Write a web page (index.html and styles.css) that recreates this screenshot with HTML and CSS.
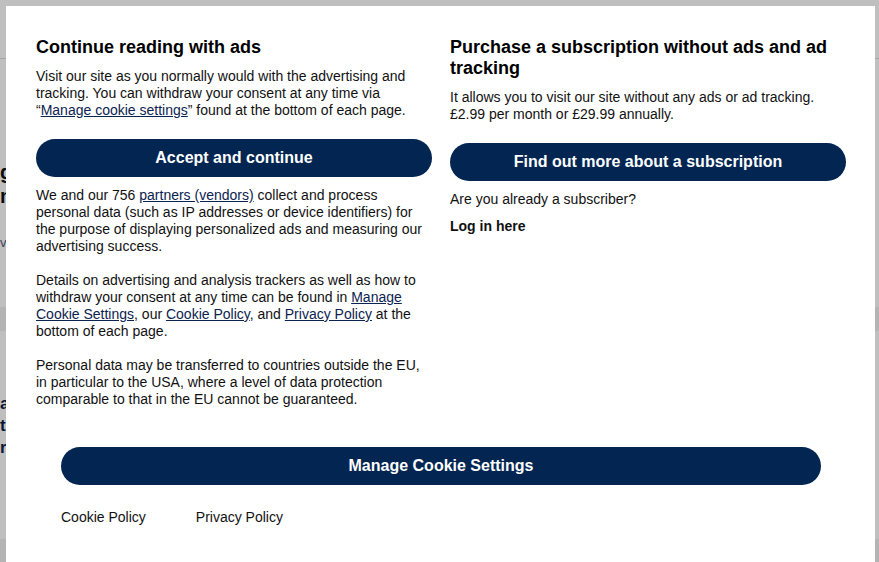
FILE: index.html
```html
<!DOCTYPE html>
<html lang="en">
<head>
<meta charset="utf-8">
<title>Cookie consent</title>
<link rel="stylesheet" href="styles.css">
</head>
<body>
<div class="page">
  <div class="page-header"></div>
  <div class="story-title">
    <span class="line">great news for the region</span>
    <span class="line">new plans announced</span>
  </div>
  <div class="story-meta">video report</div>
  <div class="band"></div>
  <div class="story-title2">
    <span class="line">a look back at the week</span>
    <span class="line">the latest headlines</span>
    <span class="line">reports from abroad</span>
  </div>
  <div class="band band-bottom"></div>
</div>

<div class="backdrop"></div>

<div class="modal" role="dialog" aria-modal="true">
  <div class="columns">
    <section class="col">
      <h2 class="title">Continue reading with ads</h2>
      <p class="text">Visit our site as you normally would with the advertising and tracking. You can withdraw your consent at any time via “<a class="link" href="#">Manage cookie settings</a>” found at the bottom of each page.</p>
      <button class="btn">Accept and continue</button>
      <div class="details">
        <p class="text">We and our 756 <a class="link" href="#">partners (vendors)</a> collect and process personal data (such as IP addresses or device identifiers) for the purpose of displaying personalized ads and measuring our advertising success.</p>
        <p class="text">Details on advertising and analysis trackers as well as how to withdraw your consent at any time can be found in <a class="link" href="#">Manage Cookie Settings</a>, our <a class="link" href="#">Cookie Policy</a>, and <a class="link" href="#">Privacy Policy</a> at the bottom of each page.</p>
        <p class="text">Personal data may be transferred to countries outside the EU, in particular to the USA, where a level of data protection comparable to that in the EU cannot be guaranteed.</p>
      </div>
    </section>
    <section class="col">
      <h2 class="title">Purchase a subscription without ads and ad tracking</h2>
      <p class="text">It allows you to visit our site without any ads or ad tracking. £2.99 per month or £29.99 annually.</p>
      <button class="btn">Find out more about a subscription</button>
      <p class="text">Are you already a subscriber?</p>
      <p class="text strong">Log in here</p>
    </section>
  </div>
  <div class="footer">
    <button class="btn btn-wide">Manage Cookie Settings</button>
    <div class="footer-links">
      <a class="footer-link" href="#">Cookie Policy</a>
      <a class="footer-link" href="#">Privacy Policy</a>
    </div>
  </div>
</div>
</body>
</html>
```

FILE: styles.css
```css
html, body {
  margin: 0;
  padding: 0;
  height: 562px;
  overflow: hidden;
  background: #ffffff;
  font-family: "Liberation Sans", Arial, sans-serif;
}

/* page behind the dialog */
.page {
  padding: 0;
}
.page-header {
  height: 58px;
  border-bottom: 1px solid #dcdcdc;
}
.line {
  display: block;
  white-space: nowrap;
}
.story-title {
  margin-top: 101px;
  font-weight: bold;
  font-size: 20px;
  line-height: 24px;
  color: #111111;
}
.story-meta {
  margin-top: 26px;
  font-size: 13px;
  line-height: 17px;
  color: #4a5a7a;
}
.band {
  margin-top: 56px;
  height: 24px;
  background: #f1f1f1;
}
.story-title2 {
  margin-top: 62px;
  font-weight: bold;
  font-size: 17px;
  line-height: 22px;
  color: #0b2147;
}
.band-bottom {
  margin-top: 80px;
  height: 40px;
}

.backdrop {
  position: fixed;
  inset: 0;
  background: rgba(0, 0, 0, 0.25);
}

/* dialog */
.modal {
  position: fixed;
  top: 6px;
  left: 6px;
  width: 869px;
  bottom: -40px;
  box-sizing: border-box;
  background: #ffffff;
  padding: 31px 29px 0 30px;
  color: #111111;
}
.columns {
  display: grid;
  grid-template-columns: 396px 396px;
  column-gap: 18px;
}
.col {
  display: flex;
  flex-direction: column;
  align-items: stretch;
}
.title {
  margin: 0 0 10px;
  font-size: 18px;
  line-height: 21px;
  font-weight: bold;
  color: #000000;
}
.text {
  margin: 0 0 10px;
  font-size: 14px;
  line-height: 17px;
}
.strong {
  font-weight: bold;
}
.link {
  color: #0b2350;
  text-decoration: underline;
}
.btn {
  display: block;
  width: 100%;
  height: 38px;
  margin: 0;
  padding: 0 16px;
  border: 0;
  border-radius: 19px;
  background: #022552;
  color: #ffffff;
  font-family: "Liberation Sans", Arial, sans-serif;
  font-size: 16px;
  font-weight: bold;
  text-align: center;
  cursor: pointer;
}
.col .btn {
  margin: 10px 0 10px;
}
.details .text {
  margin: 0 0 17px;
}
.details .text:last-child {
  margin-bottom: 0;
}
.footer {
  margin-top: 39px;
  padding: 0 25px;
}
.footer-links {
  display: flex;
  gap: 50px;
  margin-top: 24px;
  font-size: 14px;
  line-height: 17px;
}
.footer-link {
  color: #111111;
  text-decoration: none;
}
```
